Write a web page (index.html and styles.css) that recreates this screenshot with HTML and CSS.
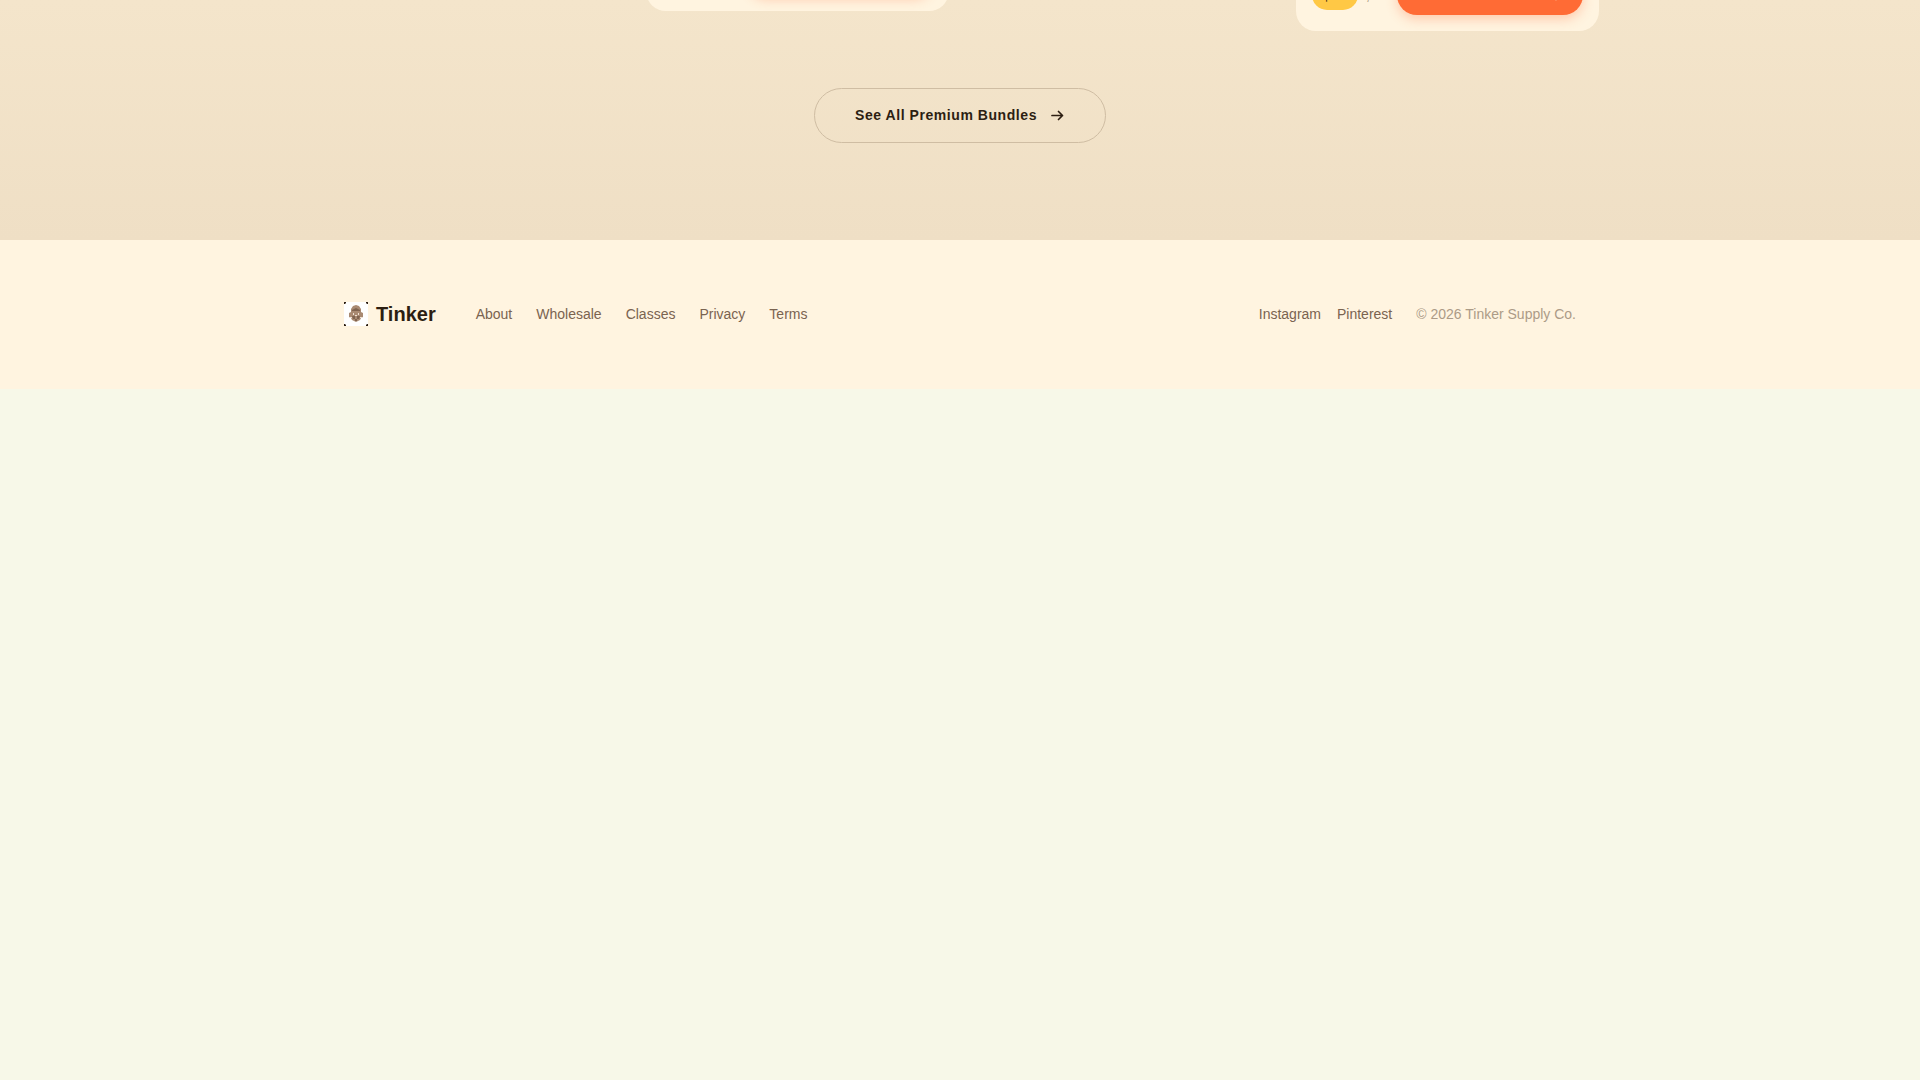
FILE: index.html
```html
<!DOCTYPE html>
<html lang="en">
<head>
    <meta charset="UTF-8">
    <title>Tinker</title>
    <link rel="stylesheet" href="styles.css">
</head>
<body>
<section class="bundles">
    <div class="cards">
        <article class="card raised">
            <span class="price"></span>
            <button class="add" aria-label="Add to cart"></button>
        </article>
        <article class="card last">
            <span class="price">$</span>
            <span class="unit">,</span>
            <button class="add" aria-label="Add to cart">
                <svg class="arrow" viewBox="0 0 16 16"><path d="M3 8.5h10M9 4.5l4 4-4 4"/></svg>
            </button>
        </article>
    </div>
    <a class="see-all" href="#">
        See All Premium Bundles
        <svg class="arrow" viewBox="0 0 16 16"><path d="M3 7.5h10.5M9.5 3.5l4 4-4 4"/></svg>
    </a>
</section>
<footer class="footer">
    <div class="footer-inner">
        <a class="brand" href="#">
            <svg class="logo" viewBox="0 0 24 24">
                <rect width="24" height="24" fill="#fff"/>
                <path d="M0 0h2v1L1 2H0zM24 0v2h-1l-1-1V0zM0 24v-2h1l1 1v1zM24 24h-2v-1l1-1h1z" fill="#2c1e12"/>
                <path d="M12 3l3 1 2 3v3l2 1v4l-2 1-1 2-2 1-2 1-2-1-2-1-1-2-2-1v-4l2-1V7l2-3z" fill="#a98a72"/>
                <path d="M8 8l4-2 4 2v1H8zM8 14h3v3H9zM13 14h3l-1 3h-2zM11 17h2v2h-2z" fill="#806450"/>
                <path d="M9 11h1v2H9zM14 11h1v2h-1zM11 13h2v1h-2zM6 15h2v1H6zM16 15h2v1h-2z" fill="#efe0d2"/>
            </svg>
            Tinker
        </a>
        <nav class="links">
            <a href="#">About</a>
            <a href="#">Wholesale</a>
            <a href="#">Classes</a>
            <a href="#">Privacy</a>
            <a href="#">Terms</a>
        </nav>
        <div class="social">
            <a href="#">Instagram</a>
            <a href="#">Pinterest</a>
        </div>
        <span class="copyright">© 2026 Tinker Supply Co.</span>
    </div>
</footer>
</body>
</html>
```
FILE: styles.css
```css
body {
    margin: 0;
    font-family: "Liberation Sans", Arial, sans-serif;
    font-size: 14px;
    line-height: 21px;
    background-color: #f7f8e8;
    color: #2c1e12;
}

a {
    color: inherit;
    text-decoration: none;
}

.bundles {
    display: flex;
    flex-direction: column;
    align-items: center;
    padding-bottom: 97px;
    background: linear-gradient(#f4e5cb, #efdfc5);
}

/* the cards hang from the top edge, the row only shows their feet */
.cards {
    display: grid;
    grid-template-columns: repeat(4, 1fr);
    grid-template-rows: 31px;
    gap: 22px;
    align-items: end;
    width: 100%;
    max-width: 1278px;
    margin-bottom: 57px;
}

.card {
    box-sizing: border-box;
    display: flex;
    align-items: center;
    height: 72px;
    padding: 16px;
    border-radius: 20px;
    background-color: #fff4e0;
}

.card.raised {
    grid-column: 2;
    margin-bottom: 20px;
}

.card.last {
    grid-column: 4;
}

.price {
    box-sizing: border-box;
    width: 46px;
    height: 30px;
    padding: 4px 10px;
    border-radius: 15px;
    background-color: #ffc845;
    font-size: 16px;
    font-weight: bold;
}

.unit {
    margin-left: 8px;
    color: #a8957f;
}

.add {
    display: flex;
    align-items: center;
    justify-content: flex-end;
    width: 186px;
    height: 40px;
    margin-left: auto;
    padding: 0 20px;
    border: none;
    border-radius: 20px;
    background-color: #ff6b35;
    color: #fff4e0;
    box-shadow: 0 4px 12px rgba(255, 107, 53, 0.3);
}

.arrow {
    width: 16px;
    height: 16px;
    fill: none;
    stroke: currentColor;
    stroke-width: 1.7;
    stroke-linecap: round;
    stroke-linejoin: round;
}

.see-all {
    display: flex;
    align-items: center;
    gap: 12px;
    padding: 16px 40px;
    border: 1px solid #cfbda3;
    border-radius: 28px;
    font-weight: bold;
    letter-spacing: 0.04em;
}

.footer {
    padding: 60px 24px 61px;
    background-color: #fff4e0;
}

.footer-inner {
    display: flex;
    align-items: center;
    max-width: 1232px;
    margin: 0 auto;
    color: #7a6350;
}

.brand {
    display: flex;
    align-items: center;
    gap: 8px;
    margin-right: 40px;
    font-size: 20px;
    line-height: 28px;
    font-weight: bold;
    color: #2c1e12;
}

.logo {
    width: 24px;
    height: 24px;
}

.links {
    display: flex;
    gap: 24px;
}

.social {
    display: flex;
    gap: 16px;
    margin-left: auto;
}

.copyright {
    margin-left: 24px;
    color: #ac9b87;
}
```
